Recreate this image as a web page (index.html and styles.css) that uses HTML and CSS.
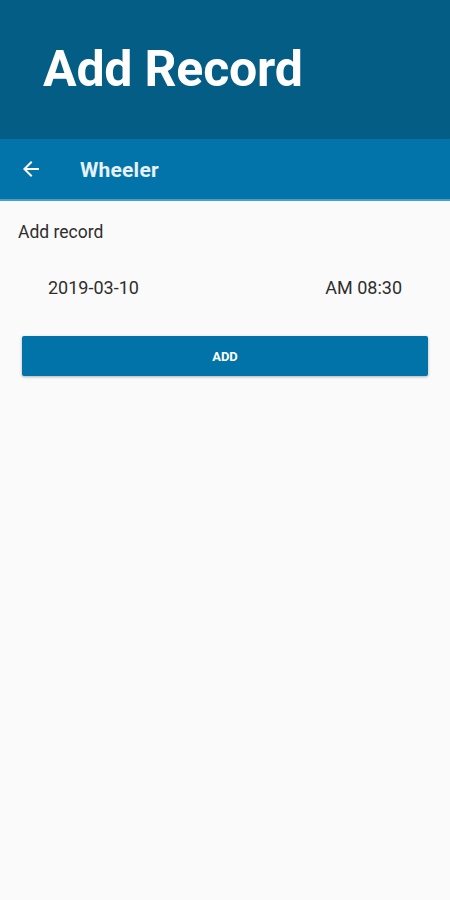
FILE: index.html
```html
<!DOCTYPE html>
<html>
<head>
<meta charset="utf-8">
<link rel="stylesheet" href="styles.css">
</head>
<body>
<header class="hero">
  <h1 class="hero-title">Add Record</h1>
</header>
<div class="toolbar">
  <svg class="back" width="24" height="24" viewBox="0 0 24 24"><path d="M20 11H7.83l5.59-5.59L12 4l-8 8 8 8 1.41-1.41L7.83 13H20v-2z" fill="#ffffff"/></svg>
  <span class="toolbar-title">Wheeler</span>
</div>
<main class="content">
  <div class="label">Add record</div>
  <div class="datetime">
    <span class="date">2019-03-10</span>
    <span class="time">AM 08:30</span>
  </div>
  <button class="add-btn">ADD</button>
</main>
</body>
</html>
```
FILE: styles.css
```css
html, body {
  margin: 0;
  padding: 0;
  height: 100%;
  background: #fafafa;
  font-family: Roboto, "Noto Sans", sans-serif;
}
.hero {
  height: 139px;
  background: #045d85;
  display: flex;
  align-items: center;
  padding-left: 43px;
  box-sizing: border-box;
}
.hero-title {
  margin: 0;
  color: #ffffff;
  font-size: 50px;
  font-weight: 700;
  letter-spacing: -0.2px;
  margin-top: -2px;
}
.toolbar {
  height: 62px;
  background: #0274a9;
  border-bottom: 2px solid #4a9fc9;
  box-sizing: border-box;
  display: flex;
  align-items: center;
  padding-left: 19px;
}
.back {
  width: 24px;
  height: 24px;
}
.toolbar-title {
  margin-left: 37px;
  color: #e6f1f7;
  font-size: 21px;
  font-weight: 700;
  letter-spacing: 0.2px;
  margin-top: 2px;
}
.content {
  padding: 0 22px 0 18px;
}
.label {
  margin-top: 19px;
  font-size: 17.5px;
  color: #2e2e2e;
  line-height: 24px;
}
.datetime {
  display: flex;
  justify-content: space-between;
  padding: 0 26px 0 30px;
  margin-top: 32px;
  font-size: 18px;
  color: #2e2e2e;
  line-height: 24px;
}
.add-btn {
  display: block;
  margin: 36px 0 0 4px;
  width: 406px;
  height: 40px;
  border: none;
  border-radius: 2px;
  background: #0273a8;
  color: #ffffff;
  font-family: Roboto, sans-serif;
  font-size: 13px;
  font-weight: 700;
  box-shadow: 0 1px 3px rgba(0,0,0,0.3);
}
```
